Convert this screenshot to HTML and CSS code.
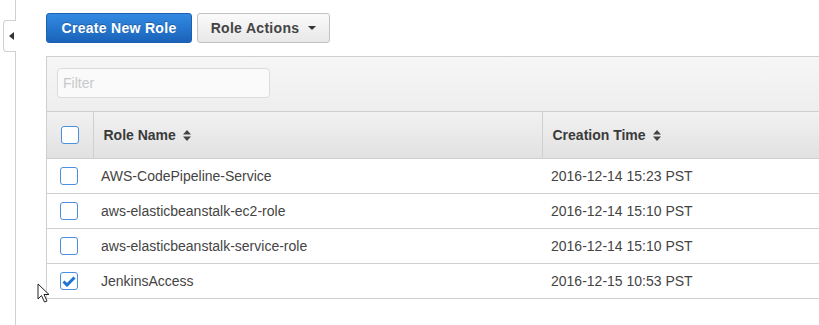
FILE: index.html
```html
<!DOCTYPE html>
<html lang="en">
<head>
  <meta charset="UTF-8" />
  <title>Roles</title>
  <link rel="stylesheet" href="styles.css">
</head>
<body>

  <div class="layout">
    <!-- Collapsed side nav -->
    <div class="sidebar">
      <div class="sidebar-tab">
        <svg width="5" height="8" viewBox="0 0 5 8"><path d="M5 0 L0 4 L5 8 Z" fill="#333"/></svg>
      </div>
    </div>

    <div class="main">
      <div class="toolbar">
        <button class="btn btn-primary">Create New Role</button>
        <button class="btn btn-default">Role Actions
          <svg class="caret" width="8" height="4" viewBox="0 0 8 4"><path d="M0 0 H8 L4 4 Z" fill="#333"/></svg>
        </button>
      </div>

      <div class="panel">
        <div class="filter-bar">
          <input class="filter" type="text" placeholder="Filter" />
        </div>

        <table class="roles">
          <colgroup>
            <col class="w-check">
            <col class="w-name">
            <col>
          </colgroup>
          <thead>
            <tr>
              <th class="col-check"><span class="check"></span></th>
              <th class="col-name">Role Name <svg class="sort" width="8" height="11" viewBox="0 0 8 11"><path d="M4 0 L8 4.5 H0 Z M0 6.5 H8 L4 11 Z" fill="#444"/></svg></th>
              <th class="col-time">Creation Time <svg class="sort" width="8" height="11" viewBox="0 0 8 11"><path d="M4 0 L8 4.5 H0 Z M0 6.5 H8 L4 11 Z" fill="#444"/></svg></th>
            </tr>
          </thead>
          <tbody>
            <tr>
              <td class="col-check"><span class="check"></span></td>
              <td class="col-name">AWS-CodePipeline-Service</td>
              <td class="col-time">2016-12-14 15:23 PST</td>
            </tr>
            <tr>
              <td class="col-check"><span class="check"></span></td>
              <td class="col-name">aws-elasticbeanstalk-ec2-role</td>
              <td class="col-time">2016-12-14 15:10 PST</td>
            </tr>
            <tr>
              <td class="col-check"><span class="check"></span></td>
              <td class="col-name">aws-elasticbeanstalk-service-role</td>
              <td class="col-time">2016-12-14 15:10 PST</td>
            </tr>
            <tr>
              <td class="col-check">
                <span class="check checked">
                  <svg width="14" height="11" viewBox="0 0 14 11"><path d="M1.5 5.5 L5 9 L12.5 1.5" fill="none" stroke="#1f73d2" stroke-width="3"/></svg>
                </span>
              </td>
              <td class="col-name">JenkinsAccess</td>
              <td class="col-time">2016-12-15 10:53 PST</td>
            </tr>
          </tbody>
        </table>
      </div>
    </div>
  </div>

  <!-- mouse pointer -->
  <svg class="pointer" width="14" height="20" viewBox="0 0 14 20">
    <path d="M1 1 V16 L4.5 12.5 L7.5 19 L10 18 L7 11.5 H12 Z" fill="#fff" stroke="#222" stroke-width="1"/>
  </svg>

</body>
</html>
```

FILE: styles.css
```css
body {
  margin: 0;
  background: #fff;
  color: #444;
  font-family: "Liberation Sans", Arial, sans-serif;
  font-size: 14px;
  overflow: hidden;
}

.layout {
  display: flex;
  min-height: 325px;
}

/* Side nav */
.sidebar {
  width: 15px;
  flex: none;
  border-right: 1px solid #d0d0d0;
  position: relative;
}

.sidebar-tab {
  position: absolute;
  top: 20px;
  left: 3px;
  width: 13px;
  height: 32px;
  box-sizing: border-box;
  padding-left: 2px;
  background: #fff;
  border: 1px solid #d0d0d0;
  border-right: none;
  border-radius: 4px 0 0 4px;
  display: flex;
  align-items: center;
  justify-content: center;
}

.main {
  flex: 1;
  padding-left: 30px;
  padding-top: 13px;
}

/* Buttons */
.toolbar {
  display: flex;
  gap: 5px;
  margin-bottom: 13px;
}

.btn {
  height: 30px;
  padding: 0;
  border-radius: 3px;
  font-family: inherit;
  font-size: 14px;
  font-weight: bold;
  letter-spacing: 0.3px;
  cursor: pointer;
}

.btn-primary {
  width: 146px;
  background: linear-gradient(#338ae2, #1a63ba);
  border: 1px solid #1c60b0;
  color: #fff;
  text-shadow: 0 -1px 0 rgba(0,0,0,0.25);
}

.btn-default {
  width: 133px;
  background: linear-gradient(#fafafa, #e8e8e8);
  border: 1px solid #c2c2c2;
  color: #444;
  display: flex;
  align-items: center;
  justify-content: center;
  gap: 9px;
}

.caret {
  display: block;
}

/* Table panel */
.panel {
  width: 820px;
  border-top: 1px solid #cfcfcf;
  border-left: 1px solid #cfcfcf;
}

.filter-bar {
  background: linear-gradient(#f6f6f6, #eeeeee);
  padding: 11px 10px 13px;
  border-bottom: 1px solid #cfcfcf;
}

.filter {
  display: block;
  width: 213px;
  height: 30px;
  box-sizing: border-box;
  border: 1px solid #dcdcdc;
  border-radius: 4px;
  background: #fafafa;
  padding: 0 5px;
  font-family: inherit;
  font-size: 14px;
}

.filter::placeholder {
  color: #c8c8c8;
}

.roles {
  width: 100%;
  border-collapse: collapse;
  table-layout: fixed;
}

.w-check {
  width: 46px;
}

.w-name {
  width: 449px;
}

.roles th {
  height: 46px;
  background: linear-gradient(#f1f1f1, #e1e1e1);
  text-align: left;
  font-weight: bold;
  color: #3a3a3a;
  border-bottom: 1px solid #cfcfcf;
  padding: 0 10px;
}

.roles th + th {
  border-left: 1px solid #cfcfcf;
}

.roles td {
  height: 34px;
  border-bottom: 1px solid #cfcfcf;
  padding: 0 8px;
  color: #444;
}

.roles .col-check {
  padding: 0;
}

.roles td.col-time {
  padding-left: 9px;
}

.sort {
  vertical-align: -1px;
  margin-left: 3px;
}

/* Checkbox */
.check {
  display: flex;
  align-items: center;
  justify-content: center;
  width: 18px;
  height: 18px;
  box-sizing: border-box;
  border: 1px solid #4a8fe0;
  border-radius: 3px;
  background: #fff;
  margin-left: 13px;
}

th .check {
  margin-left: 14px;
}

/* Pointer */
.pointer {
  position: absolute;
  left: 37px;
  top: 283px;
}
```
